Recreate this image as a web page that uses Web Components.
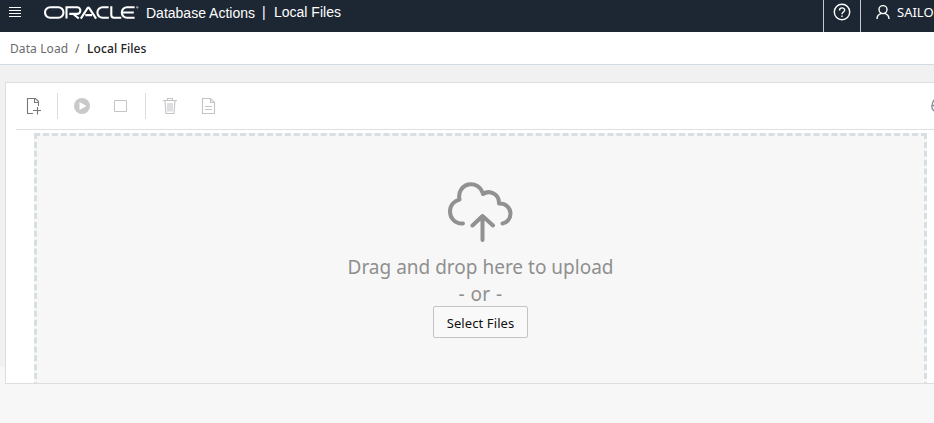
<!DOCTYPE html>
<html lang="en"><head><meta charset="utf-8"><title>Local Files</title>
<style>html,body{margin:0;height:100%;overflow:hidden;background:#f7f7f7}body{font-family:"Noto Sans","Open Sans",sans-serif}</style></head>
<body><data-load-page></data-load-page>
<script>
const define=(name,css,html)=>customElements.define(name,class extends HTMLElement{
  constructor(){super();this.attachShadow({mode:'open'}).innerHTML=`<style>*{box-sizing:border-box}svg{display:block;overflow:visible}${css}</style>${html}`}
});

define('oracle-logo',':host{display:block;width:95px;height:14px}',`
<svg width="95" height="14" viewBox="0 0 95 14" fill="none" stroke="#fff" stroke-width="2.1">
<rect x="1" y="1.3" width="18.5" height="10.4" rx="5.2"/>
<path d="M22.500 12.6V1.3h10.600a3.3 3.3 0 0 1 0 6.6H25.300M29.200 7.9l5.6 4.6"/>
<path d="M36.800 12.6L43.700 1.9q.7-.9 1.4 0L52.100 12.6M41.300 9.1h6.700"/>
<path d="M64.6 1.3h-6a5.2 5.2 0 0 0 0 10.4h6.2M67.3.3v8.8q0 2.6 2.7 2.6h7.3"/>
<path d="M90.6 1.3H83a5.2 5.2 0 0 0 0 10.4h7.6M78.3 6.5h11.5"/>
<circle cx="93.3" cy="1.4" r=".8" stroke-width=".6"/></svg>`);

define('app-header',`
:host{display:flex;height:32px;background:#1d2733;color:#fff;overflow:hidden}
.menu{margin:8px 0 0 9px;width:12px}
oracle-logo{margin:6px 0 0 23px}
.title{display:flex;margin-left:7px;font:14px/26px "Liberation Sans",sans-serif;white-space:nowrap}
.name{width:109px}.bar{margin:-1px 0 0 7px;width:12px}.page{margin-top:-1px}
.help{margin-left:auto;width:38px;border:1px solid #c5c9cc;border-width:0 1px;padding:4px 0 0 9px}
.user{display:flex;width:73px;font-size:13px;line-height:25px;white-space:nowrap}
.user svg{margin:5px 7px 0 15px;flex:none}`,`
<svg class="menu" width="12" height="10" stroke="#fff"><path d="M0 -.5h12M0 2.5h12M0 5.5h12M0 8.5h12"/></svg>
<oracle-logo></oracle-logo>
<div class="title"><span class="name">Database Actions</span><span class="bar">|</span><span class="page">Local Files</span></div>
<div class="help"><svg width="17" height="17" viewBox="0 0 17 17" fill="none" stroke="#fff" stroke-width="1.4"><circle cx="9" cy="8" r="7.7"/><path d="M6.500 6.4C6.500 3 11.700 3.2 11.700 6.1c0 2-2.7 1.9-2.7 4.2M9 11.5v1.4"/></svg></div>
<div class="user"><svg width="14" height="15" viewBox="0 0 14 15" fill="none" stroke="#fff" stroke-width="1.4"><circle cx="7" cy="4.6" r="4"/><path d="M1 14c0-3.3 2-5 4.5-5.7M13 14c0-3.3-2-5-4.5-5.7"/></svg><span>SAILO</span></div>`);

define('bread-crumb',`
:host{display:flex;height:33px;background:#fff;border-bottom:1px solid #d3dce4;padding-left:10px;font-size:12px;line-height:33px;color:#6b6b6b;white-space:nowrap}
i{font-style:normal;width:18px;padding-left:6px;color:#555}.home{width:59px;letter-spacing:.1px}b{font-weight:500;color:#222;letter-spacing:.1px}`,
`<span class="home"><slot name="parent"></slot></span><i>/</i><b><slot></slot></b>`);

define('tool-bar',`
:host{display:flex;align-items:flex-start;height:47px;margin-left:10px;border-bottom:1px solid #dedede;padding-top:10px;overflow:hidden}
hr{margin:0;border:0;flex:none;width:1px;height:26px;background:#dcdcdc}
svg{fill:none;flex:none;margin-top:5px}`,`
<svg style="margin-left:10px" width="16" height="17" stroke="#777" stroke-width="1.1"><path d="M7 15.5H1.5V.5h8l3 3V8M8.5.5v4h4M7 12.5h8M11.5 9v7.5"/></svg>
<hr style="margin-left:15px">
<svg style="margin-left:16px" width="17" height="17"><circle cx="8" cy="8" r="8" fill="#c8c9cb"/><path d="M5.500 4l7 4-7 4z" fill="#fff"/></svg>
<svg style="margin-left:23px" width="14" height="17" stroke="#c4c4c8"><path d="M.5 2.5h12v11H.5z"/></svg>
<hr style="margin-left:17px">
<svg style="margin-left:17px" width="15" height="17" stroke="#c4c4c8" stroke-width="1.1"><path d="M0 2.5h14M4.5 2.5v-2h5v2M2 3l1 12.5h8L12 3M5 5v8.5M7 5v8.5M9 5v8.5"/></svg>
<svg style="margin-left:24px" width="14" height="17" stroke="#c4c4c8" stroke-width="1.1"><path d="M.5.5h8l4 4v11H.5zM8.5.5v4h4M3 8.5h7M3 11.5h7"/></svg>
<svg style="margin-left:715px" width="16" height="17" stroke="#7d8794" stroke-width="1.3"><path d="M4 1C2 3 .8 6 .8 8.5a5 5 0 0 0 10 0C10.8 6 8 5 6 5M1 7.5h5"/></svg>`);

define('upload-zone',`
:host{display:flex;flex-direction:column;align-items:center;width:893px;height:255px;margin:3px 0 0 28px;background:#f7f7f7;border:3px dashed #d8dfe3;padding-top:46px;color:#8f8f8f;font-size:19px;line-height:27px;white-space:nowrap}
svg{margin-right:2px}
.prompt{margin-top:10px}
.or{letter-spacing:.4px}
button{width:95px;height:32px;margin:-2px 0 0;padding:1px 0 0;border:1px solid #c4c4c4;border-radius:2px;background:#f9f9f9;color:#111;font:13px/20px "Noto Sans","Open Sans",sans-serif;letter-spacing:.1px}`,`
<svg width="66" height="62" viewBox="0 0 66 62" fill="none" stroke="#919191" stroke-width="4" stroke-linecap="round" stroke-linejoin="round"><path d="M16 41.500C7 42 3 35 3 29.5 3 23.5 7 19 12.500 17.5 9 1.5 31.500 -4.500 36 12 42.500 7.500 52.500 12 52 21.500 58.500 21 63.500 26 63.500 31.500 63.500 37 59.500 41 55.500 41.500M35.500 58V34M25.500 43.500L35.500 34l10.500 9.500"/></svg>
<span class="prompt">Drag and drop here to upload</span><span class="or">- or -</span><button>Select Files</button>`);

define('file-panel',`
:host{display:block;width:929px;height:302px;margin-left:5px;background:#fff;border:1px solid #dedede;border-right:0;overflow:hidden}`,
`<tool-bar></tool-bar><upload-zone></upload-zone>`);

define('data-load-page',`
:host{display:block;height:423px;overflow:hidden;background:linear-gradient(#f1f1f1 367px,#f7f7f7 367px)}
file-panel{margin-top:17px}`,
`<app-header></app-header><bread-crumb><span slot="parent">Data Load</span>Local Files</bread-crumb><file-panel></file-panel>`);
</script></body></html>
